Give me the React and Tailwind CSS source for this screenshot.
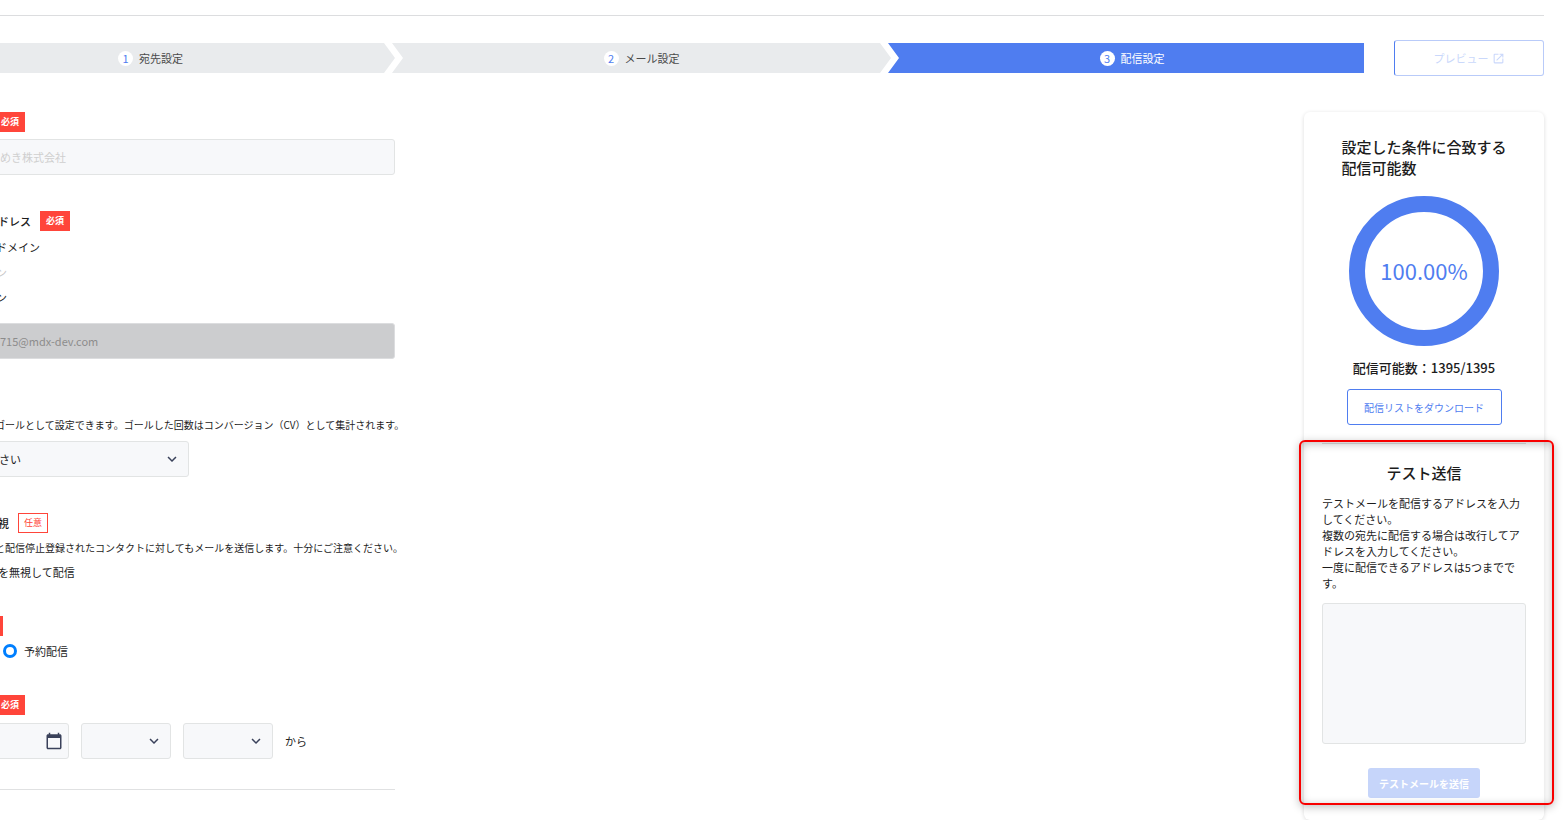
import React from "react";
import { MdCalendarToday, MdExpandMore, MdOpenInNew } from "react-icons/md";

function RequiredBadge() {
  return (
    <span className="flex h-5 items-center bg-[#ff453a] px-1.5 text-[9px] leading-5 font-bold text-white">
      必須
    </span>
  );
}

function Step({ number, label, shape, tone }) {
  return (
    <li className={`flex h-[30px] basis-0 items-center justify-center gap-1.5 text-[11px] leading-4 ${shape} ${tone}`}>
      <span className="flex size-[15px] items-center justify-center rounded-full bg-white text-[#4f7df0]">
        {number}
      </span>
      <span>{label}</span>
    </li>
  );
}

function SelectBox({ id, label, width, option }) {
  return (
    <div className={`relative ${width}`}>
      <select
        id={id}
        aria-label={label}
        className="block h-9 w-full appearance-none rounded-[3px] border border-[#e2e4e4] bg-[#f7f8fa] pr-8 pl-1.5 text-[11px] text-[#212121]"
      >
        <option>{option}</option>
      </select>
      <MdExpandMore className="pointer-events-none absolute top-[9px] right-2 size-[18px] text-[#3a415a]" />
    </div>
  );
}

function DeliveryForm() {
  return (
    <form className="-ml-2 w-[403px] shrink-0 text-[11px] leading-4">
      <div className="flex pl-[3px]">
        <RequiredBadge />
      </div>
      <input
        aria-label="差出人名"
        placeholder="めき株式会社"
        className="mt-[7px] block h-9 w-full rounded-[3px] border border-[#e2e4e4] bg-[#f7f8fa] px-[7px] placeholder:text-[#cfcfcf]"
      />

      <div className="mt-9 flex items-center gap-2 pl-1.5">
        <label htmlFor="address" className="w-[34px] font-medium">ドレス</label>
        <RequiredBadge />
      </div>
      <div className="mt-2 flex flex-col gap-[9px] pl-1">
        <span>ドメイン</span>
        <span className="text-[#c8c8c8]">ン</span>
        <span>ン</span>
      </div>
      <input
        id="address"
        disabled
        defaultValue="715@mdx-dev.com"
        className="mt-[18px] block h-9 w-full rounded-[3px] border border-[#dcdddf] bg-[#cccdcf] px-[7px] text-[#8c8c8c]"
      />

      <p className="mt-[58px] pl-[3px] text-[10px] leading-4 whitespace-nowrap">
        ゴールとして設定できます。ゴールした回数はコンバージョン（CV）として集計されます。
      </p>
      <div className="mt-2">
        <SelectBox id="goal" label="ゴール" width="w-[197px]" option="さい" />
      </div>

      <div className="mt-9 flex items-center gap-[9px] pl-1.5">
        <span className="font-medium">視</span>
        <span className="flex h-5 items-center border border-[#ff453a] px-[5px] text-[9px] leading-4 text-[#ff453a]">
          任意
        </span>
      </div>
      <p className="mt-[7px] pl-[3px] text-[10px] leading-4 whitespace-nowrap">
        と配信停止登録されたコンタクトに対してもメールを送信します。十分にご注意ください。
      </p>
      <p className="mt-2 pl-1.5">を無視して配信</p>

      <div className="mt-9 h-5 w-[11px] bg-[#ff453a]" />
      <div className="mt-[7px] flex items-center gap-[7px] pl-[11px]">
        <input
          id="reserve"
          type="radio"
          name="timing"
          defaultChecked
          className="size-[14px] appearance-none rounded-full border-[3px] border-[#007fff] bg-white"
        />
        <label htmlFor="reserve">予約配信</label>
      </div>

      <div className="mt-9 flex pl-[3px]">
        <RequiredBadge />
      </div>
      <div className="mt-2 flex items-center gap-3">
        <div className="relative w-[77px]">
          <input
            aria-label="配信日"
            className="block h-9 w-full rounded-[3px] border border-[#e2e4e4] bg-[#f7f8fa] pr-8 pl-2"
          />
          <MdCalendarToday className="pointer-events-none absolute top-[9px] right-1.5 size-[18px] text-[#3a415a]" />
        </div>
        <SelectBox id="hour" label="時" width="w-[90px]" option="" />
        <SelectBox id="minute" label="分" width="w-[90px]" option="" />
        <span>から</span>
      </div>
      <hr className="mt-[30px] border-[#e0e1e2]" />
    </form>
  );
}

function SummaryPanel() {
  return (
    <aside className="flex w-60 shrink-0 flex-col items-center rounded-md bg-white px-[18px] pt-6 pb-[22px] shadow-[0_1px_4px_rgba(0,0,0,0.14)]">
      <h2 className="text-[15px] leading-[21px] font-medium">
        設定した条件に合致する
        <br />
        配信可能数
      </h2>
      <div className="mt-[18px] flex size-[150px] items-center justify-center rounded-full border-[16px] border-[#4f7df0] pb-0.5 text-[22px] leading-8 text-[#4f7df0]">
        100.00%
      </div>
      <p className="mt-3 text-[13px] leading-5 font-medium">配信可能数：1395/1395</p>
      <button
        type="button"
        className="mt-[11px] h-9 w-[155px] rounded-[3px] border border-[#4f7df0] text-[10px] text-[#4f7df0]"
      >
        配信リストをダウンロード
      </button>

      <section className="relative mt-[18px] w-full border-t border-[#dddddd] pt-[17px]">
        <h2 className="text-center text-[15px] leading-6 font-medium">テスト送信</h2>
        <label htmlFor="test-addresses" className="mt-2.5 block text-[11px] leading-4">
          テストメールを配信するアドレスを入力してください。
          <br />
          複数の宛先に配信する場合は改行してアドレスを入力してください。
          <br />
          一度に配信できるアドレスは5つまでです。
        </label>
        <textarea
          id="test-addresses"
          className="mt-3 block h-[141px] w-full resize-none rounded-[3px] border border-[#e2e4e4] bg-[#f7f8fa]"
        />
        <button
          type="button"
          disabled
          className="mx-auto mt-6 block h-[30px] w-28 rounded-[3px] bg-[#c6d5fa] text-[10px] font-bold text-white"
        >
          テストメールを送信
        </button>
        <div className="pointer-events-none absolute -top-1 -right-7 -bottom-[7px] -left-[23px] rounded-md border-2 border-[#f80000] shadow-[0_2px_8px_rgba(0,0,0,0.25),inset_0_2px_8px_rgba(0,0,0,0.25)]" />
      </section>
    </aside>
  );
}

export default function App() {
  return (
    <div className="overflow-x-hidden bg-white pt-[15px] font-['Noto_Sans_CJK_JP',sans-serif] text-[#1c1c1c]">
      <header className="mr-[22px] border-t border-[#dcdddf] pt-6">
        <div className="flex items-center gap-[30px]">
          <ol className="-ml-[94px] flex min-w-0 flex-1">
            <Step
              number="1"
              label="宛先設定"
              shape="grow-[489] [clip-path:polygon(0_0,calc(100%-11px)_0,100%_50%,calc(100%-11px)_100%,0_100%)]"
              tone="bg-[#e9ebed] text-[#4a4a4a]"
            />
            <Step
              number="2"
              label="メール設定"
              shape="-ml-[3px] grow-[499] [clip-path:polygon(0_0,calc(100%-11px)_0,100%_50%,calc(100%-11px)_100%,0_100%,11px_50%)]"
              tone="bg-[#e9ebed] text-[#4a4a4a]"
            />
            <Step
              number="3"
              label="配信設定"
              shape="-ml-[3px] grow-[464] pl-3 [clip-path:polygon(0_0,100%_0,100%_100%,0_100%,11px_50%)]"
              tone="bg-[#4f7df0] text-white"
            />
          </ol>
          <button
            type="button"
            disabled
            className="flex h-9 w-[150px] items-center justify-center gap-[3px] rounded-[3px] border border-[#b9cbf9] border-l-[#4f7df0] text-[11px] text-[#cad8fb]"
          >
            プレビュー
            <MdOpenInNew className="size-[13px]" />
          </button>
        </div>
      </header>
      <main className="mt-9 mr-[22px] flex items-start justify-between">
        <DeliveryForm />
        <SummaryPanel />
      </main>
    </div>
  );
}
